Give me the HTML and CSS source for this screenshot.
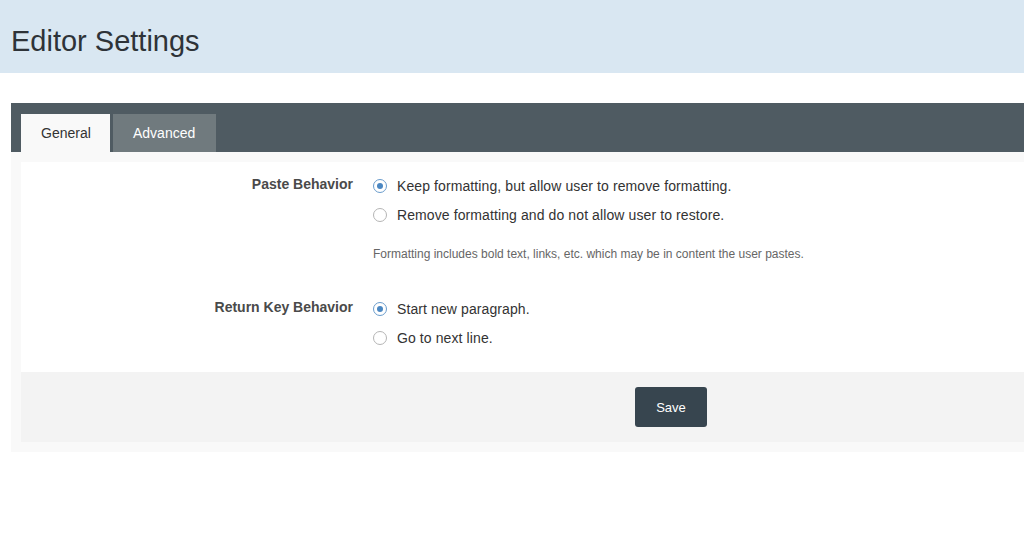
FILE: index.html
```html
<!DOCTYPE html>
<html>
<head>
<meta charset="utf-8">
<link rel="stylesheet" href="styles.css">
</head>
<body>
<header class="page-header">
  <h1 class="page-title">Editor Settings</h1>
</header>
<main class="settings">
  <nav class="tabbar">
    <div class="tab tab-active">General</div>
    <div class="tab tab-inactive">Advanced</div>
  </nav>
  <div class="panel">
    <div class="panel-body">
      <div class="form-row">
        <div class="form-label">Paste Behavior</div>
        <div class="form-field">
          <label class="radio"><span class="radio-mark checked"></span>Keep formatting, but allow user to remove formatting.</label>
          <label class="radio"><span class="radio-mark"></span>Remove formatting and do not allow user to restore.</label>
          <p class="help">Formatting includes bold text, links, etc. which may be in content the user pastes.</p>
        </div>
      </div>
      <div class="form-row row-second">
        <div class="form-label">Return Key Behavior</div>
        <div class="form-field">
          <label class="radio"><span class="radio-mark checked"></span>Start new paragraph.</label>
          <label class="radio"><span class="radio-mark"></span>Go to next line.</label>
        </div>
      </div>
    </div>
    <div class="panel-footer">
      <button class="btn-save">Save</button>
    </div>
  </div>
</main>
</body>
</html>
```
FILE: styles.css
```css
html, body {
  margin: 0;
  padding: 0;
  background: #ffffff;
  font-family: "Liberation Sans", Arial, sans-serif;
  color: #333;
  overflow: hidden;
}
.page-header {
  background: #d9e7f2;
  height: 73px;
  box-sizing: border-box;
  padding: 22px 0 0 11px;
}
.page-title {
  margin: 0;
  font-size: 29px;
  font-weight: normal;
  line-height: 38px;
  color: #2e3338;
}
.settings {
  margin: 30px 0 0 11px;
}
.tabbar {
  background: #4f5b62;
  height: 49px;
  box-sizing: border-box;
  padding: 11px 0 0 10px;
  display: flex;
  gap: 3px;
}
.tab {
  font-size: 14px;
  line-height: 38px;
  padding: 0 20px;
}
.tab-active {
  background: #f9f9f9;
  color: #333;
  width: 89px;
  box-sizing: border-box;
}
.tab-inactive {
  background: #707a7e;
  color: #fff;
  width: 103px;
  box-sizing: border-box;
}
.panel {
  background: #f9f9f9;
  padding: 10px 0 10px 10px;
}
.panel-body {
  background: #fff;
  padding: 9px 0 20px 0;
}
.form-row {
  display: flex;
}
.row-second {
  margin-top: 32px;
}
.form-label {
  width: 332px;
  text-align: right;
  font-size: 14px;
  font-weight: bold;
  line-height: 26px;
  color: #4a4a4a;
}
.form-field {
  margin-left: 20px;
}
.radio {
  display: flex;
  align-items: center;
  height: 29px;
  font-size: 14px;
  letter-spacing: 0.1px;
  color: #333;
}
.radio-mark {
  width: 14px;
  height: 14px;
  box-sizing: border-box;
  border: 1px solid #b5b5b5;
  border-radius: 50%;
  background: #fff;
  margin-right: 10px;
  display: flex;
  align-items: center;
  justify-content: center;
}
.radio-mark.checked {
  border-color: #6a9ccc;
}
.radio-mark.checked::after {
  content: "";
  width: 6px;
  height: 6px;
  border-radius: 50%;
  background: #4a87c2;
}
.help {
  margin: 17px 0 0 0;
  font-size: 12px;
  line-height: 16px;
  color: #666;
}
.panel-footer {
  background: #f3f3f3;
  padding: 15px 0 15px 614px;
}
.btn-save {
  width: 72px;
  height: 40px;
  border: none;
  border-radius: 3px;
  background: #37454f;
  color: #fff;
  font-family: "Liberation Sans", Arial, sans-serif;
  font-size: 13px;
  padding: 0;
  display: block;
}
```
